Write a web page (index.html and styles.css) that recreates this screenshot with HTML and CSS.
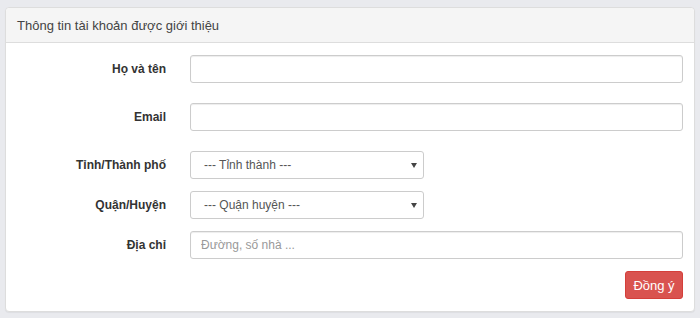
FILE: index.html
```html
<!DOCTYPE html>
<html lang="vi">
<head>
  <meta charset="UTF-8">
  <title>Thông tin tài khoản được giới thiệu</title>
  <link rel="stylesheet" href="styles.css">
</head>
<body>

<div class="panel">
  <div class="panel-heading">Thông tin tài khoản được giới thiệu</div>
  <div class="panel-body">
    <div class="form-row wide">
      <label>Họ và tên</label>
      <input type="text" class="field">
    </div>
    <div class="form-row wide">
      <label>Email</label>
      <input type="text" class="field">
    </div>
    <div class="form-row">
      <label>Tỉnh/Thành phố</label>
      <div class="select">
        <span>--- Tỉnh thành ---</span>
        <span class="caret"></span>
      </div>
    </div>
    <div class="form-row">
      <label>Quận/Huyện</label>
      <div class="select">
        <span>--- Quận huyện ---</span>
        <span class="caret"></span>
      </div>
    </div>
    <div class="form-row">
      <label>Địa chỉ</label>
      <input type="text" class="field" placeholder="Đường, số nhà ...">
    </div>
    <div class="actions">
      <button class="btn-danger">Đồng ý</button>
    </div>
  </div>
</div>

</body>
</html>
```

FILE: styles.css
```css
body {
  font-family: "Liberation Sans", Arial, sans-serif;
  margin: 0;
  padding: 7px 5px;
  background-color: #e9eaee;
  color: #333;
}
.panel {
  background-color: #fff;
  border: 1px solid #ddd;
  border-radius: 4px;
  box-shadow: 0 1px 1px rgba(0,0,0,0.05);
}
.panel-heading {
  background-color: #f5f5f5;
  border-bottom: 1px solid #ddd;
  border-radius: 4px 4px 0 0;
  padding: 10px 11px 0;
  height: 24px;
  font-size: 13px;
  color: #444;
}
.panel-body {
  padding: 12px 11px 12px 0;
}
.form-row {
  display: flex;
  align-items: center;
  margin-bottom: 12px;
}
.form-row.wide {
  margin-bottom: 20px;
}
.form-row label {
  width: 160px;
  text-align: right;
  font-size: 12px;
  font-weight: bold;
  padding-right: 24px;
  color: #333;
}
.field {
  flex: 1;
  height: 28px;
  box-sizing: border-box;
  border: 1px solid #ccc;
  border-radius: 3px;
  padding: 5px 10px;
  font-family: inherit;
  font-size: 12px;
  box-shadow: inset 0 1px 1px rgba(0,0,0,0.075);
}
.field::placeholder {
  color: #999;
}
.select {
  width: 234px;
  height: 28px;
  box-sizing: border-box;
  border: 1px solid #ccc;
  border-radius: 3px;
  padding: 0 6px 0 13px;
  display: flex;
  align-items: center;
  justify-content: space-between;
  font-size: 12px;
  color: #555;
}
.caret {
  width: 0;
  height: 0;
  border-left: 3px solid transparent;
  border-right: 3px solid transparent;
  border-top: 5px solid #444;
}
.actions {
  display: flex;
  justify-content: flex-end;
}
.btn-danger {
  background-color: #d9534f;
  border: 1px solid #d43f3a;
  border-radius: 3px;
  color: #fff;
  font-family: inherit;
  font-size: 13px;
  width: 58px;
  height: 28px;
  padding: 0;
}
```
